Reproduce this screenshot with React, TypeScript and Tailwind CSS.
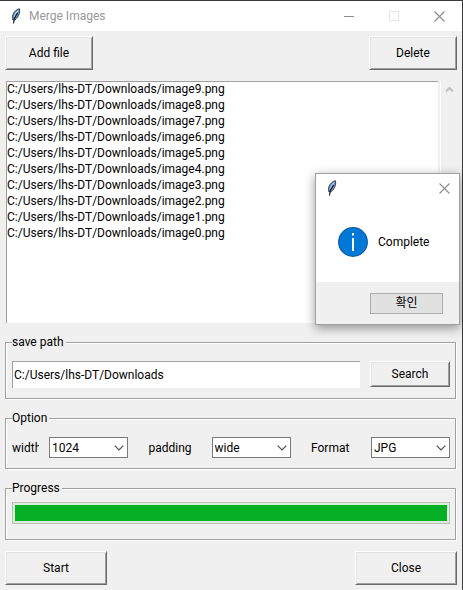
import type { ButtonHTMLAttributes, ReactNode } from "react";

const files = [9, 8, 7, 6, 5, 4, 3, 2, 1, 0].map(
  (n) => `C:/Users/lhs-DT/Downloads/image${n}.png`
);

function Feather() {
  return (
    <svg width="12" height="16" viewBox="0 0 12 16" aria-hidden="true">
      <path d="M9.500 0.800C7 1 4 3.500 3 6.500C2.300 8.800 2.300 10.300 3 12L4.800 12C7 10.300 8.600 8 9.300 5.500C9.800 3.500 9.800 2 9.500 0.800Z" fill="#6c93c8" stroke="#26354d" strokeWidth="0.900" />
      <path d="M8 2.800C6 4.300 4.600 6.300 4.200 9" stroke="#b4cdec" strokeWidth="1.200" fill="none" />
      <path d="M7.500 5L4.300 10.500L3.500 15.500" stroke="#0b0f16" strokeWidth="1.100" fill="none" />
    </svg>
  );
}

function Cross() {
  return (
    <svg width="11" height="11" viewBox="0 0 11 11" aria-hidden="true">
      <path d="M0.500 0.500L10.500 10.500M10.500 0.500L0.500 10.500" stroke="#8c8c8c" strokeWidth="1.100" fill="none" />
    </svg>
  );
}

function RaisedButton({ className, ...rest }: ButtonHTMLAttributes<HTMLButtonElement>) {
  return (
    <button
      type="button"
      className={`border border-t-white border-l-white border-r-[#696969] border-b-[#696969] bg-[#f0f0f0] text-center shadow-[inset_1px_1px_0_#e3e3e3,inset_-1px_-1px_0_#a0a0a0] ${className}`}
      {...rest}
    />
  );
}

function Group({ title, className, children }: { title: string; className: string; children: ReactNode }) {
  return (
    <fieldset className="mr-px min-w-0 border border-[#a0a0a0] pr-[5px] pl-[6px] shadow-[1px_1px_0_#fff,inset_1px_1px_0_#fff]">
      <legend className="h-4 bg-[#f0f0f0] pr-[2px] leading-4">{title}</legend>
      <div className={className}>{children}</div>
    </fieldset>
  );
}

function Choice({ id, options }: { id: string; options: string[] }) {
  return (
    <div className="relative w-[79px] shrink-0">
      <select id={id} className="block h-[21px] w-full appearance-none border border-[#7a7a7a] bg-white pr-5 pl-[2px] leading-4 outline-none">
        {options.map((o) => (
          <option key={o}>{o}</option>
        ))}
      </select>
      <svg className="pointer-events-none absolute top-2 right-1" width="10" height="6" viewBox="0 0 10 6" aria-hidden="true">
        <path d="M0.700 0.700L5 5L9.300 0.700" fill="none" stroke="#505050" strokeWidth="1.200" />
      </svg>
    </div>
  );
}

export default function App() {
  return (
    <div className="relative flex min-h-screen flex-col border-t border-r border-[#3c3a3e] bg-[#f0f0f0] font-[Roboto,'Noto_Sans_CJK_KR',sans-serif] text-[12px] leading-4 text-black">
      <header className="flex h-[30px] items-center bg-white pl-[10px]">
        <Feather />
        <h1 className="ml-[7px] flex-1 text-[#999]">Merge Images</h1>
        <button type="button" aria-label="Minimize" className="flex h-full w-[45px] items-center justify-center">
          <span className="h-px w-[10px] bg-[#8c8c8c]" />
        </button>
        <button type="button" aria-label="Maximize" disabled className="flex h-full w-[45px] items-center justify-center">
          <span className="size-[10px] border border-[#e6e6e6]" />
        </button>
        <button type="button" aria-label="Close window" className="flex h-full w-[46px] items-center justify-center">
          <Cross />
        </button>
      </header>

      <main className="flex flex-col px-[5px] pt-[5px]">
        <div className="flex justify-between">
          <RaisedButton className="h-[34px] w-[88px]">Add file</RaisedButton>
          <RaisedButton className="h-[34px] w-[88px]">Delete</RaisedButton>
        </div>

        <div className="mt-[11px] flex h-[242px] pl-px">
          <select multiple aria-label="Images" className="min-w-0 flex-1 appearance-none overflow-y-auto border-t border-l border-[#a0a0a0] bg-white p-0 outline-none">
            {files.map((f) => (
              <option key={f} className="block h-4 min-h-0 p-0 leading-4">
                {f}
              </option>
            ))}
          </select>
          <div className="ml-[2px] flex w-[17px] justify-center border-l border-white pt-[5px]">
            <svg width="9" height="7" viewBox="0 0 9 7" aria-hidden="true">
              <path d="M1 5.500L4.500 2L8 5.500" fill="none" stroke="#bfbfbf" strokeWidth="2" />
            </svg>
          </div>
        </div>

        <div className="mt-[11px] flex flex-col gap-[11px]">
          <Group title="save path" className="flex gap-[10px] pt-[11px] pb-[10px]">
            <input aria-label="save path" defaultValue="C:/Users/lhs-DT/Downloads" className="h-[27px] min-w-0 flex-1 border-t border-l border-[#a0a0a0] bg-white pl-px outline-none" />
            <RaisedButton className="h-[26px] w-[80px]">Search</RaisedButton>
          </Group>

          <Group title="Option" className="flex items-center justify-between pt-[11px] pb-[10px]">
            <div className="flex items-center gap-[10px]">
              <label htmlFor="width" className="w-[27px] overflow-hidden">width</label>
              <Choice id="width" options={["1024", "2048"]} />
            </div>
            <div className="flex items-center">
              <label htmlFor="padding" className="w-[63px]">padding</label>
              <Choice id="padding" options={["wide", "narrow"]} />
            </div>
            <div className="flex items-center">
              <label htmlFor="format" className="w-[60px]">Format</label>
              <Choice id="format" options={["JPG", "PNG"]} />
            </div>
          </Group>

          <Group title="Progress" className="pt-[6px] pb-[15px]">
            <div role="progressbar" aria-label="Progress" aria-valuenow={100} className="h-[22px] border border-[#bcbcbc] bg-[#d9eedb] p-[2px]">
              <div className="h-full bg-[#06b025]" />
            </div>
          </Group>
        </div>

        <div className="mt-[11px] flex justify-between">
          <RaisedButton className="h-[34px] w-[102px]">Start</RaisedButton>
          <RaisedButton className="h-[34px] w-[102px]">Close</RaisedButton>
        </div>
      </main>

      <div role="dialog" aria-label="Complete" className="absolute top-[172px] right-[2px] flex w-[145px] flex-col border border-[#a0a0a0] bg-white shadow-[0_3px_10px_rgba(0,0,0,0.4)]">
        <div className="flex h-7 items-center justify-between pr-[9px] pl-[10px]">
          <Feather />
          <button type="button" aria-label="Dismiss"><Cross /></button>
        </div>
        <div className="flex h-[80px] items-center gap-[10px] pl-[22px]">
          <svg width="30" height="30" viewBox="0 0 30 30" aria-hidden="true">
            <circle cx="15" cy="15" r="14.300" fill="#0078d7" stroke="#0b5fa8" strokeWidth="1.300" />
            <rect x="14" y="6" width="2" height="2.500" fill="#fff" />
            <rect x="14" y="11" width="2" height="13" fill="#fff" />
          </svg>
          <p>Complete</p>
        </div>
        <div className="flex h-[42px] items-center justify-end bg-[#f0f0f0] pr-4">
          <button type="button" className="h-[21px] w-[73px] border border-[#adadad] bg-[#e1e1e1]">확인</button>
        </div>
      </div>
    </div>
  );
}
